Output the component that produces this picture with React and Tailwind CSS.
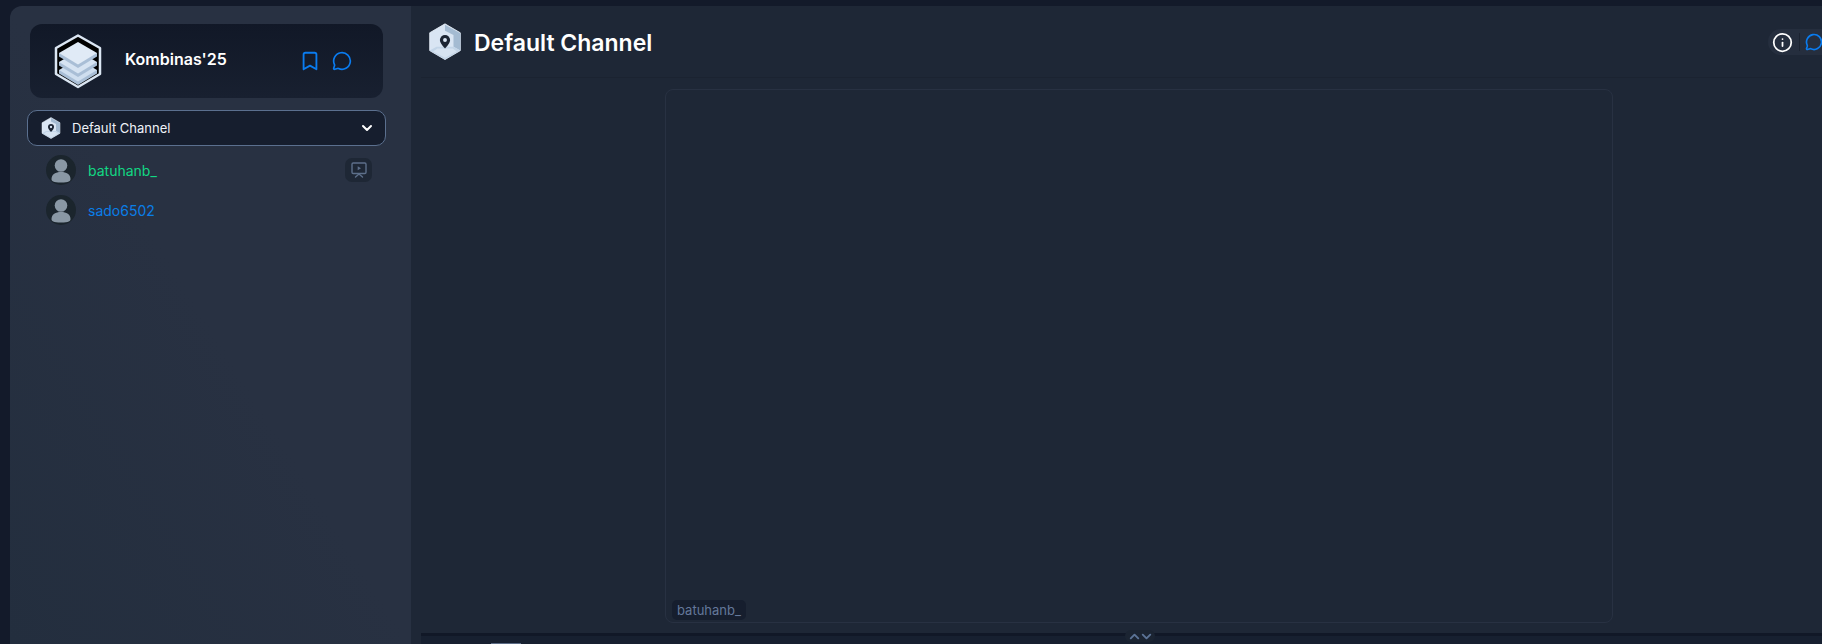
import React from "react";
import { Bookmark, MessageCircle, ChevronDown, ChevronUp, Info } from "lucide-react";

const Layer = ({ y, top }) => (
  <g>
    <path d={`M6 ${y + 11}v3.500L25 ${y + 26}l19-11.500V${y + 11}Z`} fill="#a9bed6" />
    <path d={`M25 ${y}l19 ${11}-19 ${11.500}L6 ${y + 11}Z`} fill={top} />
  </g>
);

const Stack = () => (
  <svg width="50" height="56" viewBox="0 0 50 56">
    <path d="M25 2.500 47 15v26L25 54 3 41V15Z" fill="#000" stroke="#dbe6f3" strokeWidth="2.500" strokeLinejoin="round" />
    <Layer y={26} top="#cfdeef" />
    <Layer y={18} top="#d6e3f2" />
    <Layer y={9} top="#e0eaf6" />
  </svg>
);

const Hex = ({ size }) => (
  <svg width={size} height={size * 1.1} viewBox="0 0 40 44">
    <path d="M20 1 38 11.500v21L20 43 2 32.500v-21Z" fill="#d9e5f3" stroke="#e6eef7" strokeWidth="1" strokeLinejoin="round" />
    <path d="M20 2 38 12v20.500L30 28V14L20 9Z" fill="#a4bbd2" />
    <path d="M2 32.500 10 28h20l8 4.500L20 43Z" fill="#c3d5e8" />
    <path d="M6 33.500 11 30h18l5 3.500L20 41Z" fill="#e2ecf6" opacity="0.6" />
    <path d="M20 30c-4-4.500-6-7-6-10a6 6 0 0 1 12 0c0 3-2 5.500-6 10Z" fill="#1b2433" />
    <circle cx="20" cy="20" r="2.300" fill="#d9e5f3" />
  </svg>
);

const Avatar = () => (
  <div className="w-[30px] h-[30px] rounded-full bg-[#1b252d] overflow-hidden shrink-0">
    <svg width="30" height="30" viewBox="0 0 30 30">
      <circle cx="15" cy="10.500" r="6.300" fill="#8a98a5" />
      <path d="M5.500 24c0-4.500 4-7 9.500-7s9.500 2.500 9.500 7c0 2-1.500 3.500-9.500 3.500S5.500 26 5.500 24Z" fill="#8a98a5" />
    </svg>
  </div>
);

const Screen = () => (
  <svg width="18" height="18" viewBox="0 0 18 18" fill="none" stroke="#5d6f8a" strokeWidth="1.400" strokeLinecap="round" strokeLinejoin="round">
    <rect x="2" y="2" width="14" height="10.500" rx="1.200" />
    <path d="M5.500 16 9 13l3.500 3" />
    <path d="M7.700 5.200 11 7.200 7.700 9.200Z" fill="#5d6f8a" stroke="none" />
  </svg>
);

export default function App() {
  return (
    <div className="w-[1822px] h-[644px] overflow-hidden bg-[#131a2a] pt-[6px] pl-[10px] flex text-white" style={{ fontFamily: "Inter, 'Liberation Sans', sans-serif" }}>
      <aside className="w-[401px] shrink-0 rounded-tl-[12px] bg-gradient-to-tr from-[#232e3e] via-[#283142] to-[#283142] pt-[18px] pl-[17px] pr-[24px] flex flex-col">
        <div className="ml-[3px] w-[353px] h-[74px] rounded-[12px] bg-gradient-to-b from-[#111827] to-[#182030] flex items-center">
          <div className="ml-[23px] w-[50px] flex justify-center"><Stack /></div>
          <span className="ml-[22px] text-[16px] leading-[20px] font-semibold w-[150px] -mt-[5px]">Kombinas'25</span>
          <Bookmark size={22} strokeWidth={2} className="text-[#0a7cf0] ml-[24px]" />
          <MessageCircle size={20} strokeWidth={2} className="text-[#0a7cf0] ml-[11px]" />
        </div>
        <div className="mt-[12px] h-[36px] w-[359px] rounded-[10px] border border-[#5b708f] bg-[#161e2e] flex items-center pl-[13px]">
          <Hex size={20} />
          <span className="ml-[11px] text-[13px] text-[#eef2f7] mt-[1px]">Default Channel</span>
          <ChevronDown size={16} strokeWidth={3} className="ml-auto mr-[10px] text-white" />
        </div>
        <div className="mt-[9px] ml-[19px] h-[30px] w-[326px] flex items-center">
          <Avatar />
          <span className="ml-[12px] text-[14px] text-[#12d884]">batuhanb_</span>
          <div className="ml-auto w-[27px] h-[24px] rounded-[7px] bg-[#1e2735] flex items-center justify-center"><Screen /></div>
        </div>
        <div className="mt-[10px] ml-[19px] h-[30px] flex items-center">
          <Avatar />
          <span className="ml-[12px] text-[14px] text-[#0a7ee8]">sado6502</span>
        </div>
      </aside>
      <main className="flex-1 min-w-0 bg-[#1e2736] relative flex flex-col overflow-hidden">
        <header className="h-[72px] ml-[10px] shrink-0 border-b-[1px] border-[#1b2331] flex items-center pl-[7px] relative">
          <Hex size={34} />
          <h1 className="ml-[12px] text-[23px] font-semibold leading-[30px] mt-[3px]">Default Channel</h1>
          <div className="absolute left-[1347px] top-[23px] w-[80px] h-[26px] rounded-l-[13px] bg-[#252e3e] flex items-center pl-[4px]">
            <Info size={21} strokeWidth={2} className="text-white" />
            <div className="w-px h-[18px] bg-[#1b2331] ml-[6px]" />
            <MessageCircle size={18} strokeWidth={2.200} className="text-[#0a7cf0] ml-[5px]" />
          </div>
        </header>
        <div className="flex-1 flex pt-[11px] pl-[254px]">
          <div className="relative w-[948px] h-[534px] rounded-[8px] border border-[#283142]">
            <span className="absolute left-[6px] bottom-[2px] h-[20px] px-[5px] rounded-[5px] bg-[#161e2e] text-[13px] leading-[20px] text-[#64789a]">batuhanb_</span>
          </div>
        </div>
        <div className="absolute left-[10px] right-0 top-[627px] h-[11px] bg-[#172030] border-t-[3px] border-[#111827]">
          <div className="absolute left-[70px] top-[7px] w-[30px] h-[8px] bg-[#5b6b85]" />
          <div className="absolute left-[704px] -top-[6px] w-[30px] h-[12px] rounded-[6px] bg-[#1b2432] flex items-center justify-center text-[#5b7396]">
            <ChevronUp size={15} strokeWidth={3} />
            <ChevronDown size={15} strokeWidth={3} className="-ml-[3px]" />
          </div>
        </div>
      </main>
    </div>
  );
}
